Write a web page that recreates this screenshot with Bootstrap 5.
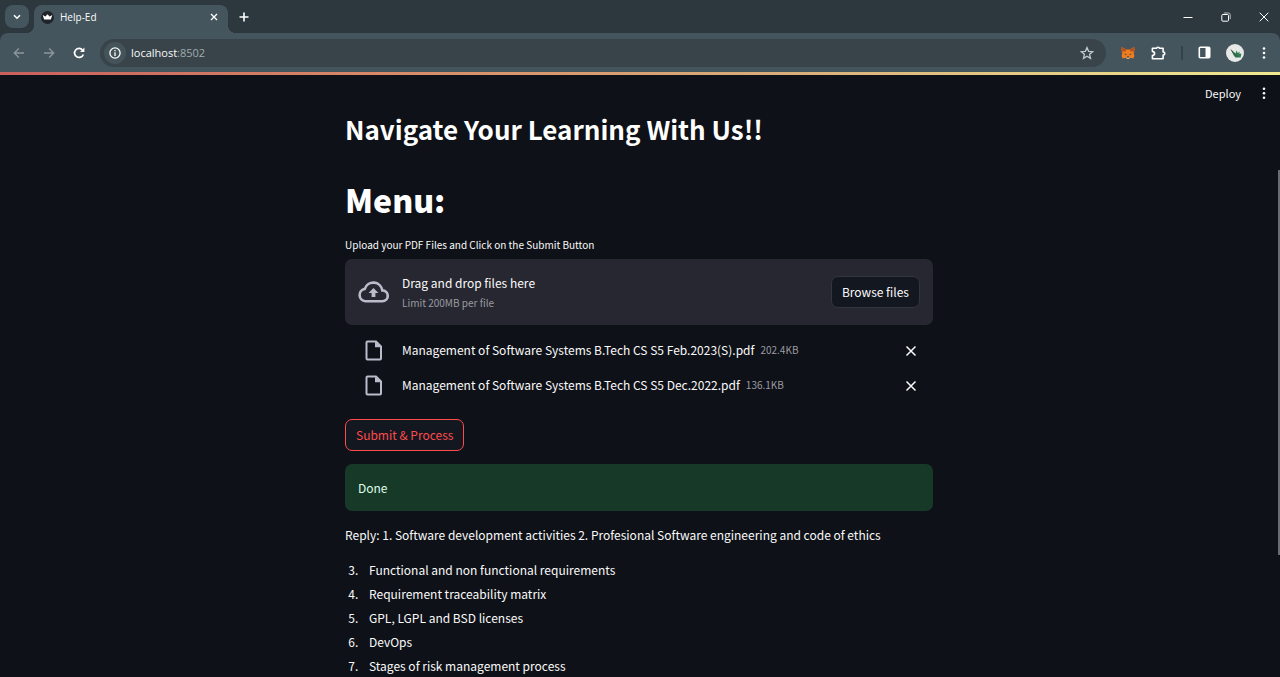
<!DOCTYPE html>
<html lang="en" data-bs-theme="dark">
<head>
<meta charset="utf-8">
<meta name="viewport" content="width=device-width, initial-scale=1">
<title>Help-Ed</title>
<link href="https://cdn.jsdelivr.net/npm/bootstrap@5.3.0/dist/css/bootstrap.min.css" rel="stylesheet">
<style>
  body { background: #0e1117; color: #fafafa; font-family: "Noto Sans CJK SC", "Open Sans", sans-serif; font-size: 12px; line-height: 20px; }
  button { font: inherit; color: inherit; }
  svg { display: block; flex: none; }
  .browser-ui { font-family: "Open Sans", "Noto Sans", sans-serif; background: #2d383e; }
  .bare { background: none; border: 0; padding: 0; color: inherit; line-height: 1; }

  .tab-strip { height: 33px; padding-left: 5px; }
  .tab-search { width: 24px; height: 23px; margin: 5px 5px 5px 0; border-radius: 8px; background: #45555d; }
  .browser-tab { width: 194px; height: 28px; margin-top: 5px; padding: 0 10px 4px 7px; border-radius: 8px 8px 0 0; background: #45555d; font-size: 10px; }
  .browser-tab::before, .browser-tab::after { content: ""; position: absolute; bottom: 0; width: 8px; height: 8px; }
  .browser-tab::before { left: -8px; background: radial-gradient(circle at 0 0, transparent 8px, #45555d 8px); }
  .browser-tab::after { right: -8px; background: radial-gradient(circle at 100% 0, transparent 8px, #45555d 8px); }
  .tab-name { margin-left: 6px; }
  .tab-add { margin: 0 0 0 11px; }
  .window-buttons { gap: 28px; padding-right: 11px; }

  .toolbar { height: 39px; padding: 0 11px 0 12px; background: #45555d; border-radius: 8px 8px 0 0; }
  .nav-buttons { gap: 16px; margin-right: 14px; color: #fff; }
  .nav-buttons :disabled { color: #8a969c; }
  .address { height: 28px; padding: 0 12px 0 4px; border-radius: 14px; background: #38444a; }
  .site-info { width: 22px; height: 22px; border-radius: 50%; background: #45535a; }
  .address-text { margin-left: 5px; font-size: 11px; }
  .address-text span { color: #a0abb0; }
  .extensions { gap: 15px; margin-left: 15px; }
  .divider { width: 2px; height: 14px; background: #34434a; }
  .avatar { width: 18px; height: 18px; }

  .accent-line { height: 3px; flex: none; background: linear-gradient(90deg, #c9605f, #d98a68 30%, #d9ad79 60%, #f1e990); }
  .app-menu { top: 11px; right: 10px; gap: 17px; font-size: 11px; }
  .app-column { width: 100%; max-width: 588px; margin: 0 auto; }
  .app-main { padding: 34px 2px 0 0; }
  .app-title { font-size: 26px; font-weight: 700; line-height: 40px; margin: 0 0 25px; }
  .menu-title { font-size: 32px; font-weight: 900; line-height: 50px; margin: 0 0 11px; }
  .field-label { font-size: 10px; line-height: 20px; margin: 0 0 4px; display: block; }
  .dropzone { background: #262730; border-radius: 7px; padding: 0 13px; height: 66px; }
  .drop-icon { width: 44px; }
  .drop-text { padding-top: 2px; }
  .quiet { color: #9a9ba1; font-size: 10px; }
  .btn-app { border: 1px solid #32353d; border-radius: 7px; background: #131720; color: #fafafa; font-size: 12px; line-height: 20px; padding: 5px 10px; }
  .btn-app:hover { border-color: #ff4b4b; color: #ff4b4b; }
  .btn-submit { border-color: #ff4b4b; color: #ff4b4b; }
  .file-list { padding: 8px 16px 16px 19px; }
  .file-row { height: 35px; }
  .file-icon { width: 38px; }
  .file-text { gap: 6px; padding-bottom: 2px; }
  .done { background: #173928; border-radius: 7px; padding: 13px; margin: 13px 0 14px; color: #dffde9; line-height: 21px; }
  .reply-list { margin: 13px 0 0; padding-left: 16px; line-height: 24px; }
  .reply-list li { padding-left: 8px; }
  .scroll-thumb { right: 0; top: 95px; width: 2px; height: 385px; background: #6b6c70; }
</style>
</head>
<body class="vh-100 d-flex flex-column overflow-hidden">

<header class="browser-ui flex-shrink-0">
  <div class="tab-strip d-flex align-items-center">
    <button class="tab-search bare d-flex align-items-center justify-content-center" aria-label="Search tabs">
      <svg width="8" height="6" viewBox="0 0 8 6" fill="none" stroke="#fff" stroke-width="1.6"><path d="M1 1.2 4 4.2 7 1.2"/></svg>
    </button>
    <div class="browser-tab position-relative d-flex align-items-center">
      <svg width="13" height="13" viewBox="0 0 14 14"><circle cx="7" cy="7" r="7" fill="#21232b"/><path d="M1.8 4.4 4.7 6 7 3.4 9.3 6 12.2 4.4 10.6 9.2H3.4Z" fill="#fff"/></svg>
      <span class="tab-name flex-grow-1">Help-Ed</span>
      <button class="bare" aria-label="Close tab"><svg width="8" height="8" viewBox="0 0 8 8" stroke="#fff" stroke-width="1.3"><path d="M1 1 7 7M7 1 1 7"/></svg></button>
    </div>
    <button class="bare tab-add" aria-label="New tab"><svg width="10" height="10" viewBox="0 0 10 10" stroke="#fff" stroke-width="1.6"><path d="M5 .5V9.5M.5 5H9.5"/></svg></button>
    <div class="window-buttons d-flex align-items-center ms-auto">
      <button class="bare" aria-label="Minimize"><svg width="10" height="10" viewBox="0 0 10 10" stroke="#fff"><path d="M.5 5.5H9.5"/></svg></button>
      <button class="bare" aria-label="Restore"><svg width="10" height="10" viewBox="0 0 10 10" fill="none" stroke="#fff"><rect x=".8" y="2.5" width="6.7" height="6.7" rx="1"/><path d="M2.8 1H7.5Q9.2 1 9.2 2.6V7.2" stroke="#b8bfc2"/></svg></button>
      <button class="bare" aria-label="Close"><svg width="10" height="10" viewBox="0 0 10 10" stroke="#fff"><path d="M.7 .7 9.3 9.3M9.3 .7 .7 9.3"/></svg></button>
    </div>
  </div>
  <nav class="toolbar d-flex align-items-center" aria-label="Browser toolbar">
    <div class="nav-buttons d-flex align-items-center">
      <button class="bare" disabled aria-label="Back"><svg width="14" height="14" viewBox="0 0 14 14" fill="none" stroke="currentColor" stroke-width="1.4"><path d="M12 7H2.5M6.8 2.5 2.3 7 6.8 11.5"/></svg></button>
      <button class="bare" disabled aria-label="Forward"><svg width="14" height="14" viewBox="0 0 14 14" fill="none" stroke="currentColor" stroke-width="1.4"><path d="M2 7H11.5M7.2 2.5 11.7 7 7.2 11.5"/></svg></button>
      <button class="bare" aria-label="Reload"><svg width="14" height="14" viewBox="0 0 14 14" fill="none" stroke="currentColor" stroke-width="1.7"><path d="M11.3 8.4A4.5 4.5 0 1 1 10.6 4.2"/><path d="M12.4 1.6V6H8Z" fill="currentColor" stroke="none"/></svg></button>
    </div>
    <div class="address flex-grow-1 d-flex align-items-center">
      <button class="site-info bare d-flex align-items-center justify-content-center" aria-label="Site information"><svg width="12" height="12" viewBox="0 0 12 12" fill="none" stroke="#fff" stroke-width="1.3"><circle cx="6" cy="6" r="5.1"/><path d="M6 5.3V9M6 3V4.3"/></svg></button>
      <span class="address-text flex-grow-1">localhost<span>:8502</span></span>
      <button class="bare" aria-label="Bookmark this page"><svg width="14" height="14" viewBox="0 0 14 14" fill="none" stroke="#c3cacd" stroke-width="1.3"><path d="M7 1.6 8.6 5.3 12.7 5.7 9.6 8.3 10.5 12.3 7 10.2 3.5 12.3 4.4 8.3 1.3 5.7 5.4 5.3Z"/></svg></button>
    </div>
    <div class="extensions d-flex align-items-center">
      <button class="bare" aria-label="Wallet extension"><svg width="14" height="14" viewBox="0 0 14 14"><path d="M.8 1 5.2 3.4H8.8L13.2 1 13.6 4 12.7 7.2 13.4 10 12.3 12.6 9.3 11.8 8.2 12.8H5.8L4.7 11.8 1.7 12.6.6 10 1.3 7.2.4 4Z" fill="#ee7d20"/><path d="M.8 1 5.2 3.4 4.6 5.4 1 5.6.4 4ZM13.2 1 8.8 3.4 9.4 5.4 13 5.6 13.6 4Z" fill="#b5521f"/><path d="M3.4 7.4 5.6 8.2 5 9.2ZM10.6 7.4 8.4 8.2 9 9.2Z" fill="#2b3440"/><path d="M5.3 11H8.7L8.2 12.8H5.8Z" fill="#d5bfb2"/><path d="M6 10.4H8L8.3 11.5H5.7Z" fill="#22272c"/></svg></button>
      <button class="bare" aria-label="Extensions"><svg width="16" height="16" viewBox="0 0 16 16" fill="none" stroke="#fff" stroke-width="1.6" stroke-linejoin="round"><path d="M2.4 3.3H6.6Q6.6 2.3 8 2.3T9.4 3.3H13.1V7Q14.8 7 14.8 8.5T13.1 10V13.7H2.4V10.6Q4.6 10.2 4.6 8.5T2.4 6.4Z"/></svg></button>
      <span class="divider"></span>
      <button class="bare" aria-label="Side panel"><svg width="13" height="13" viewBox="0 0 13 13"><rect x="1.3" y="1.3" width="10.4" height="10.4" rx="1" fill="none" stroke="#fff" stroke-width="1.6"/><path d="M7.5 1H12V12H7.5Z" fill="#fff"/></svg></button>
      <button class="bare avatar" aria-label="Profile"><svg width="18" height="18" viewBox="0 0 18 18"><circle cx="9" cy="9" r="9" fill="#e6e9e8"/><path d="M5 6 8 8 9.4 9.6 10.8 6.2 11.6 9.2 13.6 7.4 13.4 10 15.4 9.6 14.6 13.4 9.4 13.6 7.6 11.2Z" fill="#2f7a50"/><path d="M5 5.6 8.8 10.5 11.8 12.6" stroke="#42524b" fill="none"/></svg></button>
      <button class="bare" aria-label="Browser menu"><svg width="10" height="14" viewBox="0 0 10 14" fill="#fff"><circle cx="5" cy="2.5" r="1.3"/><circle cx="5" cy="7" r="1.3"/><circle cx="5" cy="11.5" r="1.3"/></svg></button>
    </div>
  </nav>
</header>

<div class="accent-line"></div>

<div class="position-relative flex-grow-1 overflow-hidden">
  <div class="app-menu position-absolute d-flex align-items-center">
    <button class="bare">Deploy</button>
    <button class="bare" aria-label="App menu"><svg width="12" height="14" viewBox="0 0 12 14" fill="#fafafa"><circle cx="6" cy="2.8" r="1.3"/><circle cx="6" cy="7.3" r="1.3"/><circle cx="6" cy="11.8" r="1.3"/></svg></button>
  </div>

  <main class="app-main">
    <div class="app-column">
      <h2 class="app-title">Navigate Your Learning With Us!!</h2>
      <h1 class="menu-title">Menu:</h1>
      <span class="field-label">Upload your PDF Files and Click on the Submit Button</span>

      <section class="dropzone d-flex align-items-center">
        <div class="drop-icon"><svg width="31" height="22" viewBox="0 0 31 22" fill="none" stroke="#b9bccb" stroke-width="2.6"><path d="M7.4 20.2A6.2 6.2 0 0 1 6.8 7.9 9 9 0 0 1 24.3 9.4 5.4 5.4 0 0 1 24.4 20.2Z"/><path d="M15.5 7 20.4 12H17.4V16H13.6V12H10.6Z" fill="#b9bccb" stroke="none"/></svg></div>
        <div class="drop-text flex-grow-1 d-flex flex-column">
          <span>Drag and drop files here</span>
          <small class="quiet">Limit 200MB per file</small>
        </div>
        <button class="btn btn-app">Browse files</button>
      </section>

      <ul class="file-list list-unstyled mb-0">
        <li class="file-row d-flex align-items-center">
          <div class="file-icon"><svg width="19" height="21" viewBox="0 0 19 21" fill="none" stroke="#b9bccb" stroke-width="2"><path d="M3.5 1.5H12L17 6.5V18.5Q17 19.5 16 19.5H3.5Q2.5 19.5 2.5 18.5V2.5Q2.5 1.5 3.5 1.5Z"/><path d="M11 1.5V7.2H17Z" fill="#b9bccb" stroke="none"/></svg></div>
          <div class="file-text d-flex">
            <span>Management of Software Systems B.Tech CS S5 Feb.2023(S).pdf</span>
            <small class="quiet">202.4KB</small>
          </div>
          <button class="bare ms-auto" aria-label="Remove file"><svg width="12" height="12" viewBox="0 0 12 12" stroke="#fafafa" stroke-width="1.5"><path d="M1.5 1.5 10.5 10.5M10.5 1.5 1.5 10.5"/></svg></button>
        </li>
        <li class="file-row d-flex align-items-center">
          <div class="file-icon"><svg width="19" height="21" viewBox="0 0 19 21" fill="none" stroke="#b9bccb" stroke-width="2"><path d="M3.5 1.5H12L17 6.5V18.5Q17 19.5 16 19.5H3.5Q2.5 19.5 2.5 18.5V2.5Q2.5 1.5 3.5 1.5Z"/><path d="M11 1.5V7.2H17Z" fill="#b9bccb" stroke="none"/></svg></div>
          <div class="file-text d-flex">
            <span>Management of Software Systems B.Tech CS S5 Dec.2022.pdf</span>
            <small class="quiet">136.1KB</small>
          </div>
          <button class="bare ms-auto" aria-label="Remove file"><svg width="12" height="12" viewBox="0 0 12 12" stroke="#fafafa" stroke-width="1.5"><path d="M1.5 1.5 10.5 10.5M10.5 1.5 1.5 10.5"/></svg></button>
        </li>
      </ul>

      <button class="btn btn-app btn-submit">Submit &amp; Process</button>
      <div class="done" role="status">Done</div>
      <p class="mb-0">Reply: 1. Software development activities 2. Profesional Software engineering and code of ethics</p>
      <ol class="reply-list" start="3">
        <li>Functional and non functional requirements</li>
        <li>Requirement traceability matrix</li>
        <li>GPL, LGPL and BSD licenses</li>
        <li>DevOps</li>
        <li>Stages of risk management process</li>
      </ol>
    </div>
  </main>
  <div class="scroll-thumb position-absolute"></div>
</div>

<script src="https://cdn.jsdelivr.net/npm/bootstrap@5.3.0/dist/js/bootstrap.bundle.min.js"></script>
</body>
</html>
